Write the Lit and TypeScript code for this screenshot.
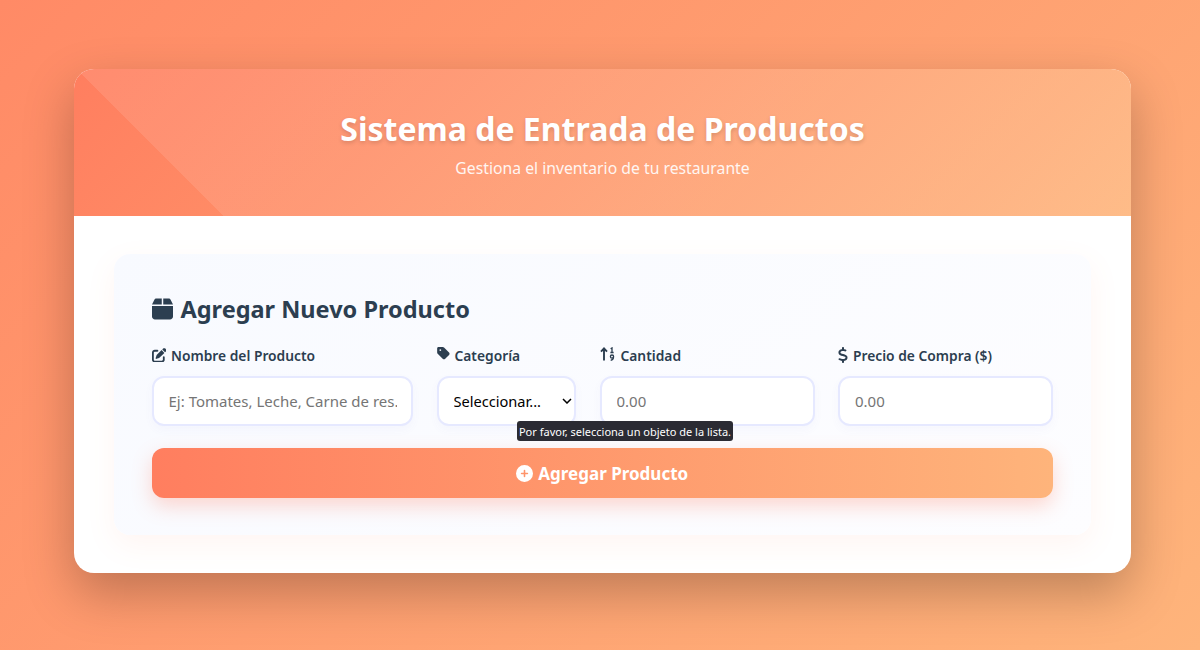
import { LitElement, html, css, svg } from "lit";
import { customElement } from "lit/decorators.js";

const box = svg`<svg class="ic" viewBox="0 0 448 512" width="21" height="24"><path fill="currentColor" d="M50.7 58.5L0 160H208V32H93.7C75.5 32 58.9 42.3 50.7 58.5zM240 160H448L397.3 58.5C389.1 42.3 372.5 32 354.3 32H240V160zm208 32H0V416c0 35.3 28.7 64 64 64H384c35.3 0 64-28.7 64-64V192z"/></svg>`;
const edit = svg`<svg class="ic" viewBox="0 0 512 512" width="14.5" height="14.5"><path fill="currentColor" d="M471.6 21.7c-21.9-21.9-57.3-21.9-79.2 0L362.3 51.7l97.9 97.9 30.1-30.1c21.9-21.9 21.9-57.3 0-79.2L471.6 21.7zm-299.2 220c-6.1 6.1-10.8 13.6-13.5 21.9l-29.6 88.8c-2.9 8.6-.6 18.1 5.8 24.6s15.9 8.7 24.6 5.8l88.8-29.6c8.2-2.7 15.7-7.4 21.9-13.5L437.7 172.3 339.7 74.3 172.4 241.7zM96 64C43 64 0 107 0 160V416c0 53 43 96 96 96H352c53 0 96-43 96-96V320c0-17.7-14.3-32-32-32s-32 14.3-32 32v96c0 17.7-14.3 32-32 32H96c-17.7 0-32-14.3-32-32V160c0-17.7 14.3-32 32-32h96c17.7 0 32-14.3 32-32s-14.3-32-32-32H96z"/></svg>`;
const tag = svg`<svg class="ic up" viewBox="0 0 448 512" width="13" height="14.5"><path fill="currentColor" d="M0 80V229.5c0 17 6.7 33.3 18.7 45.3l176 176c25 25 65.5 25 90.5 0L418.7 317.3c25-25 25-65.5 0-90.5l-176-176c-12-12-28.3-18.7-45.3-18.7H48C21.5 32 0 53.5 0 80zm112 32a32 32 0 1 1 0 64 32 32 0 1 1 0-64z"/></svg>`;
const sort = svg`<svg class="ic up" viewBox="0 0 16 14" width="16" height="14"><path fill="none" stroke="currentColor" stroke-width="1.9" d="M4 13.5V2M1 4.6 4 1.4l3 3.2"/><path fill="none" stroke="currentColor" stroke-width="1.3" d="M10.6 1.7 12 .9v4.4M10.4 5.5h3.2"/><circle cx="12" cy="9.6" r="1.6" fill="none" stroke="currentColor" stroke-width="1.3"/><path fill="none" stroke="currentColor" stroke-width="1.3" d="M13.5 10c0 2-1 3-2.8 3.3"/></svg>`;
const dollar = svg`<svg class="ic" viewBox="0 0 320 512" width="10" height="16"><path fill="currentColor" d="M160 0c17.7 0 32 14.3 32 32V67.7c1.6 .2 3.1 .4 4.7 .7c.4 .1 .7 .1 1.1 .2l48 8.8c17.4 3.2 28.9 19.9 25.7 37.2s-19.9 28.9-37.2 25.7l-47.5-8.7c-31.3-4.6-58.9-1.5-78.3 6.2s-27.2 18.3-29 28.1c-2 10.7-.5 16.7 1.2 20.4c1.8 3.9 5.5 8.3 12.8 13.2c16.3 10.7 41.3 17.7 73.7 26.3l2.9 .8c28.6 7.6 63.6 16.8 89.6 33.8c14.2 9.3 27.6 21.9 35.9 39.5c8.5 17.9 10.3 37.9 6.4 59.2c-6.9 38-33.1 63.4-65.6 76.7c-13.7 5.6-28.6 9.2-44.4 11V480c0 17.7-14.3 32-32 32s-32-14.3-32-32V445.1c-.4-.1-.9-.1-1.3-.2l-.2 0 0 0c-24.4-3.8-64.5-14.3-91.5-26.3c-16.1-7.2-23.4-26.1-16.2-42.2s26.1-23.4 42.2-16.2c20.9 9.3 55.3 18.5 75.2 21.6c31.9 4.7 58.2 2 76-5.3c16.9-6.9 24.6-16.9 26.8-28.9c1.9-10.6 .4-16.7-1.3-20.4c-1.9-4-5.6-8.4-13-13.3c-16.4-10.7-41.5-17.7-74-26.3l-2.8-.7 0 0C119.4 279.3 84.4 270 58.4 253c-14.2-9.3-27.5-22-35.8-39.6c-8.4-17.9-10.1-37.9-6.1-59.2C23.7 116 52.3 91.2 85.1 78.6c13-5 27.3-8.2 42.9-9.8V32c0-17.7 14.3-32 32-32z"/></svg>`;
const plus = svg`<svg class="ic" viewBox="0 0 512 512" width="17" height="17"><path fill="currentColor" d="M256 512A256 256 0 1 0 256 0a256 256 0 1 0 0 512zM232 344V280H168c-13.3 0-24-10.7-24-24s10.7-24 24-24h64V168c0-13.3 10.7-24 24-24s24 10.7 24 24v64h64c13.3 0 24 10.7 24 24s-10.7 24-24 24H280v64c0 13.3-10.7 24-24 24s-24-10.7-24-24z"/></svg>`;
const chevron = svg`<svg class="chev" viewBox="0 0 10 6" width="10" height="6"><path fill="none" stroke="#000" stroke-width="1.5" d="M1 1l4 4 4-4"/></svg>`;

@customElement("app-root")
export class AppRoot extends LitElement {
  static styles = css`
    :host {
      display: block;
      width: 1200px;
      height: 650px;
      overflow: hidden;
      box-sizing: border-box;
      padding: 69px 69px 0 74px;
      background: linear-gradient(135deg, #ff8a66, #feb47b);
      font-family: "Noto Sans", "Open Sans", sans-serif;
      color: #2c3e50;
    }
    * { box-sizing: border-box; }
    .ic { display: block; flex: none; }
    .container {
      width: 1057px;
      height: 504px;
      background: #fff;
      border-radius: 20px;
      overflow: hidden;
      box-shadow: 0 20px 50px rgba(0, 0, 0, 0.25);
    }
    header {
      position: relative;
      height: 147px;
      padding-top: 38px;
      text-align: center;
      color: #fff;
      background: linear-gradient(135deg, #ff7e5f, #feb47b);
    }
    header::before {
      content: "";
      position: absolute;
      inset: 0;
      background: linear-gradient(45deg, transparent 106px, rgba(255, 255, 255, 0.1) 106px);
    }
    h1 {
      position: relative;
      margin: 0;
      font-size: 32px;
      line-height: 44px;
      font-weight: 700;
      text-shadow: 0 2px 4px rgba(0, 0, 0, 0.15);
    }
    .sub {
      position: relative;
      margin: 7px 0 0;
      font-size: 15.75px;
      line-height: 20px;
      opacity: 0.9;
    }
    main { padding: 38px 40px; }
    .panel {
      height: 281px;
      padding: 39px 38px 38px 37.5px;
      border-radius: 16px;
      background: linear-gradient(145deg, #f8faff, #fdfdff);
      box-shadow: 0 10px 30px rgba(255, 126, 95, 0.08);
    }
    h2 {
      display: flex;
      align-items: center;
      gap: 8px;
      margin: 0;
      font-size: 23.5px;
      line-height: 32px;
      font-weight: 700;
    }
    .grid {
      position: relative;
      display: grid;
      grid-template-columns: 261.5px 139.5px 215px 215px;
      column-gap: 23.5px;
      margin-top: 20px;
    }
    label {
      display: flex;
      align-items: center;
      gap: 5px;
      height: 20px;
      margin-bottom: 11px;
      font-size: 13.8px;
      font-weight: 600;
      white-space: nowrap;
    }
    .up { margin-top: -3px; }
    input, select {
      display: block;
      width: 100%;
      height: 50px;
      border: 2px solid #e6e9ff;
      border-radius: 12px;
      background: #fff;
      font-family: inherit;
      font-size: 15px;
      color: #000;
      outline: none;
      box-shadow: 0 4px 10px rgba(100, 110, 200, 0.04);
    }
    input { padding: 0 14px 0 15px; }
    input::placeholder { color: #757575; opacity: 1; }
    .select-wrap { position: relative; }
    select {
      appearance: none;
      padding: 0 14px 0 15px;
      font-size: 14.6px;
    }
    .chev {
      position: absolute;
      right: 4px;
      top: 22px;
      pointer-events: none;
    }
    .tip {
      position: absolute;
      left: 365.5px;
      top: 76px;
      width: 216px;
      height: 20px;
      display: flex;
      align-items: center;
      justify-content: center;
      border-radius: 3px;
      background: #2b2b33;
      color: #fff;
      font-size: 11px;
      white-space: nowrap;
    }
    button {
      display: flex;
      align-items: center;
      justify-content: center;
      gap: 5px;
      width: 100%;
      height: 50px;
      margin-top: 22px;
      border: 0;
      border-radius: 12px;
      background: linear-gradient(to right, #ff7e5f, #feb47b);
      color: #fff;
      font-family: inherit;
      font-size: 17px;
      font-weight: 700;
      box-shadow: 0 8px 20px rgba(255, 126, 95, 0.3);
    }
  `;

  render() {
    return html`
      <div class="container">
        <header>
          <h1>Sistema de Entrada de Productos</h1>
          <p class="sub">Gestiona el inventario de tu restaurante</p>
        </header>
        <main>
          <section class="panel">
            <h2>${box}Agregar Nuevo Producto</h2>
            <div class="grid">
              <div>
                <label>${edit}Nombre del Producto</label>
                <input placeholder="Ej: Tomates, Leche, Carne de res." />
              </div>
              <div>
                <label>${tag}Categoría</label>
                <div class="select-wrap">
                  <select><option>Seleccionar...</option></select>
                  ${chevron}
                </div>
              </div>
              <div>
                <label>${sort}Cantidad</label>
                <input placeholder="0.00" />
              </div>
              <div>
                <label>${dollar}Precio de Compra ($)</label>
                <input placeholder="0.00" />
              </div>
              <div class="tip">Por favor, selecciona un objeto de la lista.</div>
            </div>
            <button>${plus}Agregar Producto</button>
          </section>
        </main>
      </div>
    `;
  }
}
